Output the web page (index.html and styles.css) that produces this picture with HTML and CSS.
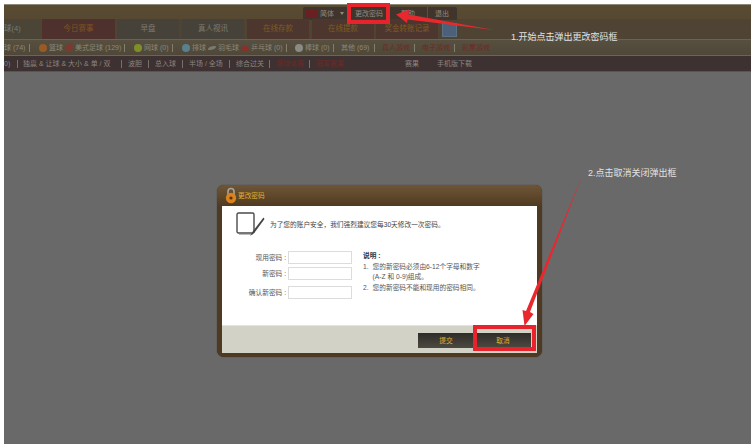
FILE: index.html
```html
<!DOCTYPE html>
<html>
<head>
<meta http-equiv="Content-Type" content="text/html; charset=utf-8"/>
<title>更改密码</title>
<link rel="stylesheet" href="styles.css">
</head>

<body>
<div class="page">

  <div class="topbar">
    <div class="usermenu">
      <span class="flag"></span>
      <span class="lang">简体</span>
      <span class="caret"></span>
      <a class="um um-pass">更改密码</a>
      <a class="um um-help">帮助</a>
      <a class="um um-exit">退出</a>
    </div>
  </div>

  <div class="tabs">
    <a class="tab tab-first">球(4)</a>
    <a class="tab tab-red">今日赛事</a>
    <a class="tab">早盘</a>
    <a class="tab tab-live">真人视讯</a>
    <a class="tab tab-red">在线存款</a>
    <a class="tab tab-red">在线提款</a>
    <a class="tab tab-red">奖金转账记录</a>
    <span class="tab-icon"></span>
  </div>

  <div class="sports">
    <span class="sp sp-a">球 (74)</span>
    <span class="sp sp-b"><i class="ball orange"></i>篮球<i class="ball rugby"></i>美式足球 (129)</span>
    <span class="sp sp-c"><i class="ball green"></i>网球 (0)</span>
    <span class="sp sp-d"><i class="ball blue"></i>排球<i class="ball shuttle"></i>羽毛球<i class="ball pingpong"></i>乒乓球 (0)</span>
    <span class="sp sp-e"><i class="ball grey"></i>棒球 (0)</span>
    <span class="sp sp-f">其他 (69)</span>
    <span class="sp sp-g red">真人游戏</span>
    <span class="sp sp-g red">电子游戏</span>
    <span class="sp sp-g red">彩票游戏</span>
  </div>

  <div class="bets">
    <span class="bt bt-a">0)</span>
    <span class="bt bt-b">独赢 &amp; 让球 &amp; 大小 &amp; 单 / 双</span>
    <span class="bt">波胆</span>
    <span class="bt">总入球</span>
    <span class="bt bt-c">半场 / 全场</span>
    <span class="bt bt-d">综合过关</span>
    <span class="bt bt-d red">滚球体育</span>
    <span class="bt bt-d red">冠军赛果</span>
    <span class="bets-right">
      <span>赛果</span>
      <span>手机版下载</span>
    </span>
  </div>

  <div class="dialog">
    <div class="dialog-title">
      <svg class="lock" width="12" height="17" viewBox="0 0 12 17">
        <path d="M3 8V4.5a3 3 0 0 1 6 0V8" fill="none" stroke="#a9a59b" stroke-width="1.6"/>
        <circle cx="6" cy="11" r="5.2" fill="#d9821f"/>
        <circle cx="6" cy="11" r="1.6" fill="#5a3208"/>
      </svg>
      <span>更改密码</span>
    </div>

    <div class="dialog-body">
      <div class="intro">
        <svg class="note" width="29" height="25" viewBox="0 0 29 25">
          <rect x="1" y="1" width="17" height="20" rx="1.5" fill="#fff" stroke="#4b4b4b" stroke-width="1.4"/>
          <path d="M3 22.5h14" stroke="#bbb" stroke-width="1"/>
          <path d="M27.5 5.5L17 19l-3 5 4.600-3.400L28.500 7z" fill="#444"/>
        </svg>
        <p>为了您的账户安全，我们强烈建议您每30天修改一次密码。</p>
      </div>

      <div class="form-wrap">
        <div class="fields">
          <label class="field"><span>现用密码 :</span><input type="password"></label>
          <label class="field"><span>新密码 :</span><input type="password"></label>
          <label class="field"><span>确认新密码 :</span><input type="password"></label>
        </div>
        <div class="rules">
          <b>说明 :</b>
          <div class="rule"><span>1.</span><span>您的新密码必须由6-12个字母和数字<br>(A-Z 和 0-9)组成。</span></div>
          <div class="rule"><span>2.</span><span>您的新密码不能和现用的密码相同。</span></div>
        </div>
      </div>
    </div>

    <div class="dialog-foot">
      <a class="btn">提交</a>
      <a class="btn">取消</a>
    </div>
  </div>

  <!-- red callouts drawn over the page -->
  <svg class="marks" width="754" height="444" viewBox="0 0 754 444">
    <rect x="349" y="5" width="39" height="17" fill="none" stroke="#e9232b" stroke-width="4"/>
    <rect x="475" y="327" width="59" height="22" fill="none" stroke="#e9232b" stroke-width="4"/>
    <path d="M396 14.500L409 9.500 408.500 14.500 494 30 407.500 19.500 407 23z" fill="#e9282e"/>
    <path d="M582 176L530 312 533.500 314 524.500 326 522.500 310 526 311z" fill="#e9282e"/>
  </svg>
  <div class="callout callout-1">1.开始点击弹出更改密码框</div>
  <div class="callout callout-2">2.点击取消关闭弹出框</div>

</div>
</body>
</html>
```

FILE: styles.css
```css
html, body {
  margin: 0;
  padding: 0;
  height: 100%;
  background: #fff;
  overflow: hidden;
}

body {
  font-family: "Liberation Sans", "Noto Sans CJK SC", sans-serif;
  font-size: 7px;
  line-height: 10px;
}

.page {
  margin: 4px 3px 0 4px;
  height: 440px;
  background: #696969;
  overflow: hidden;
}

a {
  display: block;
}

.red {
  color: #6e2a26;
}

/* header rows */
.topbar {
  height: 15px;
  box-sizing: border-box;
  border-top: 1px solid #8b8779;
  background: linear-gradient(#5a4c33, #564831);
  display: flex;
  padding: 2px 0 0 299px;
}

.usermenu {
  display: flex;
  align-items: center;
  width: 154px;
  height: 13px;
  background: #40352d;
  color: #8f8b84;
  border-radius: 2px 2px 0 0;
}

.flag {
  width: 12px;
  height: 8px;
  margin-left: 3px;
  background: #6a2020;
}

.lang {
  margin-left: 2px;
}

.caret {
  margin-left: 6px;
  border: 2.500px solid transparent;
  border-top: 3px solid #8f8b84;
  border-bottom: 0;
}

.um {
  text-align: center;
  border-left: 1px solid #57504a;
  height: 13px;
  line-height: 13px;
}

.um-pass {
  width: 38px;
  margin-left: 5px;
}

.um-help {
  width: 38px;
}

.um-exit {
  width: 28px;
}

.tabs {
  height: 20px;
  display: flex;
  background: #4f4433;
  border-bottom: 1px solid #6b6350;
}

.tab {
  width: 62px;
  margin-right: 3px;
  text-align: center;
  line-height: 20px;
  background: #46423a;
  color: #7f7a6e;
  font-size: 7.500px;
}

.tab-first {
  width: 36px;
  margin-right: 2px;
  text-align: left;
  background: #4a4537;
}

.tab-red {
  background: #4d362e;
  color: #7e5d22;
}

.tab:nth-child(2) {
  width: 73px;
  margin-right: 2px;
  color: #7c5620;
  background: #4e302c;
}

.tab:nth-child(6) {
  margin-right: 2px;
}

.tab-icon {
  width: 13px;
  height: 12px;
  margin: 4px 0 0 1px;
  background: #4b6079;
  border: 1px solid #5d6f82;
}

.sports {
  height: 16px;
  box-sizing: border-box;
  padding-top: 1px;
  display: flex;
  align-items: center;
  background: linear-gradient(#575040, #4f4838);
  border-bottom: 1px solid #6a6557;
  color: #8b877a;
  white-space: nowrap;
}

.sp {
  display: flex;
  align-items: center;
  height: 8px;
  border-right: 1px solid #827d6c;
}

.sp-a { width: 25px; }
.sp-b { width: 87px; padding-left: 7px; }
.sp-c { width: 40px; padding-left: 7px; }
.sp-d { width: 106px; padding-left: 7px; }
.sp-e { width: 40px; padding-left: 6px; }
.sp-f { width: 33px; padding-left: 7px; }
.sp-g { width: 32px; padding-left: 7px; }

.sp-g.red:last-child {
  border-right: 0;
}

.ball {
  width: 8px;
  height: 8px;
  margin: 0 2px;
  border-radius: 50%;
  flex: none;
}

.orange { background: #9a5a24; }
.rugby { background: #7a3a30; border-radius: 60% 20%; }
.green { background: #7e8f2a; }
.blue { background: #5a7f8f; }
.shuttle { background: #7a7a6e; border-radius: 80% 10%; height: 4px; }
.pingpong { background: #8a2f2a; height: 5px; }
.grey { background: #8b8b85; }

.bets {
  height: 16px;
  box-sizing: border-box;
  padding-top: 1px;
  display: flex;
  align-items: center;
  background: #3e3131;
  border-bottom: 1px solid #5a5550;
  color: #8a8580;
  white-space: nowrap;
}

.bt {
  padding: 0 6px;
  height: 8px;
  line-height: 8px;
  border-right: 1px solid #77716c;
}

.bt-a { width: 8px; padding-left: 0; padding-right: 5px; }
.bt-b { width: 92px; padding-left: 5px; }
.bt-c { width: 34px; }
.bt-d { width: 27px; }
.bt-d.red { width: 27px; }
.bt-d:nth-child(8) { border-right: 0; }

.bets-right {
  display: flex;
  gap: 18px;
  margin-left: 56px;
}

/* password dialog */
.dialog {
  position: absolute;
  left: 217px;
  top: 185px;
  width: 325px;
  height: 172px;
  box-sizing: border-box;
  padding: 0 5px 4px 5px;
  border-radius: 7px;
  background: #4e3a22;
  box-shadow: 0 0 1px #3a3026;
  display: flex;
  flex-direction: column;
  color: #444;
  font-size: 6.700px;
}

.dialog-title {
  height: 21px;
  margin: 0 -5px;
  padding-left: 8px;
  display: flex;
  align-items: center;
  color: #e0b030;
  border-radius: 7px 7px 0 0;
  background: linear-gradient(#6f5535, #4f3b22);
}

.lock {
  margin-right: 1px;
}

.dialog-body {
  height: 119px;
  background: #fff;
}

.intro {
  display: flex;
  align-items: flex-end;
  padding: 6px 0 0 14px;
}

.intro p {
  margin: 0 0 7px 5px;
  white-space: nowrap;
}

.form-wrap {
  display: flex;
  margin-top: 14px;
}

.fields {
  width: 130px;
  flex: none;
}

.field {
  display: flex;
  justify-content: flex-end;
  align-items: center;
  height: 13px;
  margin-bottom: 3px;
  white-space: nowrap;
  color: #555;
}

.field:nth-child(2) {
  margin-bottom: 6px;
}

.field input {
  width: 64px;
  height: 13px;
  box-sizing: border-box;
  margin: 0 0 0 2px;
  padding: 0;
  border: 1px solid #dcdcdc;
  background: #fff;
}

.rules {
  margin-left: 11px;
  color: #555;
}

.rules b {
  display: block;
  color: #333;
  margin-bottom: 1px;
}

.rule {
  display: flex;
  gap: 4px;
  margin-bottom: 1px;
  white-space: nowrap;
}

.dialog-foot {
  flex: 1;
  display: flex;
  justify-content: flex-end;
  gap: 1px;
  padding: 7px 6px 0 0;
  background: #d3d2c6;
  border-top: 1px solid #e6e5dc;
}

.btn {
  width: 56px;
  height: 15px;
  line-height: 15px;
  text-align: center;
  color: #e0b030;
  background: linear-gradient(#2f2d28, #4b4940);
}

/* callouts */
.marks {
  position: absolute;
  left: 0;
  top: 0;
}

.callout {
  position: absolute;
  color: #e2e2e2;
  font-size: 9px;
  line-height: 12px;
  white-space: nowrap;
}

.callout-1 {
  left: 511px;
  top: 31px;
}

.callout-2 {
  left: 588px;
  top: 167px;
}
```
